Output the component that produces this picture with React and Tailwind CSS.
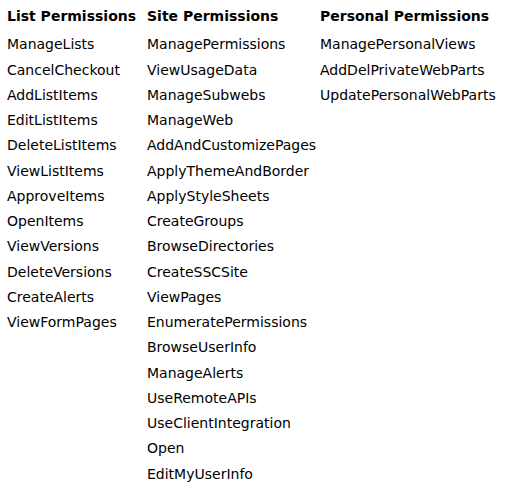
const columns = [
  {
    title: "List Permissions",
    width: "w-[140px]",
    items: [
      "ManageLists",
      "CancelCheckout",
      "AddListItems",
      "EditListItems",
      "DeleteListItems",
      "ViewListItems",
      "ApproveItems",
      "OpenItems",
      "ViewVersions",
      "DeleteVersions",
      "CreateAlerts",
      "ViewFormPages",
    ],
  },
  {
    title: "Site Permissions",
    width: "w-[173px]",
    items: [
      "ManagePermissions",
      "ViewUsageData",
      "ManageSubwebs",
      "ManageWeb",
      "AddAndCustomizePages",
      "ApplyThemeAndBorder",
      "ApplyStyleSheets",
      "CreateGroups",
      "BrowseDirectories",
      "CreateSSCSite",
      "ViewPages",
      "EnumeratePermissions",
      "BrowseUserInfo",
      "ManageAlerts",
      "UseRemoteAPIs",
      "UseClientIntegration",
      "Open",
      "EditMyUserInfo",
    ],
  },
  {
    title: "Personal Permissions",
    width: "flex-1",
    items: ["ManagePersonalViews", "AddDelPrivateWebParts", "UpdatePersonalWebParts"],
  },
];

export default function App() {
  return (
    <div className="min-h-screen bg-white pl-[7px] pt-[6px] text-[14px] text-black [font-family:Verdana,'DejaVu_Sans',sans-serif]">
      <div className="flex">
        {columns.map((col) => (
          <div key={col.title} className={col.width}>
            <h3 className="font-bold leading-[20px] mb-[6.4px]">{col.title}</h3>
            <ul>
              {col.items.map((item) => (
                <li key={item} className="leading-[25.25px]">{item}</li>
              ))}
            </ul>
          </div>
        ))}
      </div>
    </div>
  );
}
